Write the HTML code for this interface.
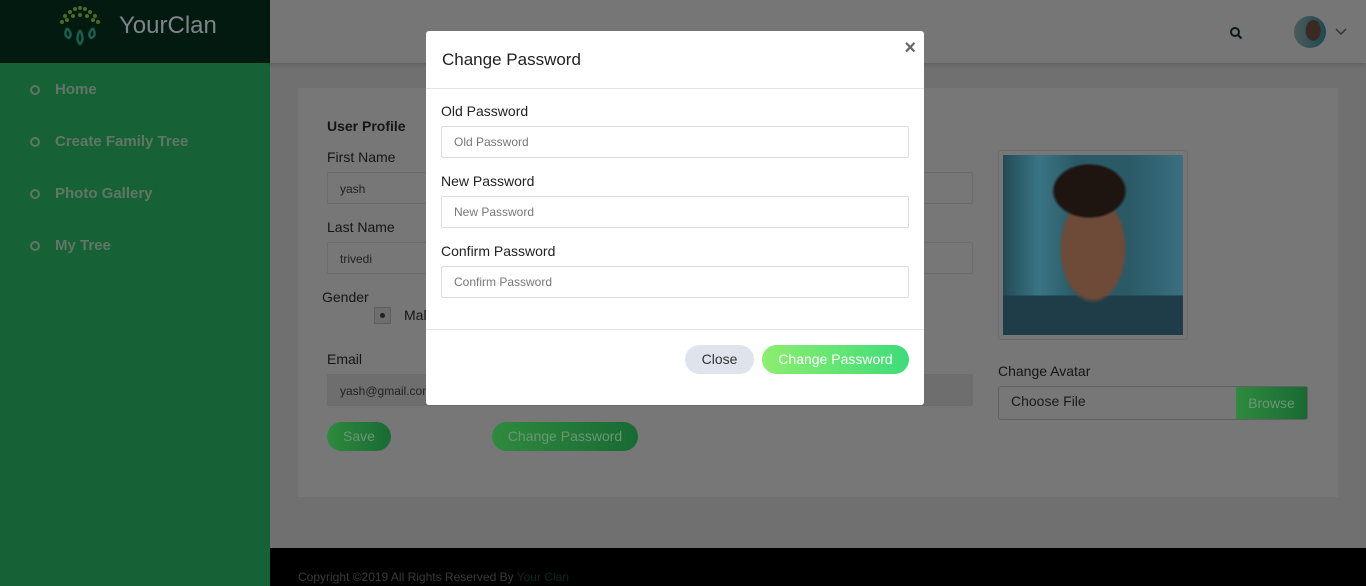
<!DOCTYPE html>
<html><head><style>
*{box-sizing:border-box;margin:0;padding:0}
body{width:1366px;height:586px;overflow:hidden;position:relative;font-family:"Liberation Sans",sans-serif;background:#707070}
.abs{position:absolute}
#side{left:0;top:0;width:270px;height:586px;background:#166236}
#logo{left:0;top:0;width:270px;height:63px;background:#021a10}
#top{left:270px;top:0;width:1096px;height:63px;background:#767676;box-shadow:0 2px 4px rgba(0,0,0,.15)}
.nav{position:absolute;left:30px;color:#627566;font-weight:bold;font-size:15px}
.nav i{display:inline-block;width:10px;height:10px;border:2px solid #627566;border-radius:50%;margin-right:15px;vertical-align:-1px}
#card{left:298px;top:88px;width:1040px;height:409px;background:#777}
.lbl{position:absolute;color:#151515;font-size:14px}
.inp{position:absolute;background:#777;border:1px solid #6c6c6c;border-radius:2px;height:32px;font-size:12px;color:#222;padding:9px 12px}
.btn{position:absolute;border-radius:16px;background:linear-gradient(90deg,#2f8a3e,#186a34);color:#6b9674;font-size:14px;text-align:center;line-height:28px;height:29px}
#foot{left:270px;top:548px;width:1096px;height:38px;background:#000;color:#3a3a3a;font-size:12px;padding:22px 0 0 28px}
#modal{left:426px;top:31px;width:498px;height:374px;background:#fff;border-radius:3px}
.ml{position:absolute;left:15px;color:#222;font-size:14px}
.mi{position:absolute;left:15px;width:468px;height:32px;border:1px solid #ddd;border-radius:2px;font-size:12px;color:#777;padding:8px 12px}
</style></head><body>
<div class="abs" id="side"></div>
<div class="abs" id="logo">
<svg class="abs" style="left:55px;top:4px" width="50" height="44" viewBox="0 0 50 44">
<g fill="#4f6b25"><circle cx="10" cy="12" r="2"/><circle cx="15" cy="8" r="2"/><circle cx="20" cy="5" r="2"/><circle cx="25" cy="4" r="2"/><circle cx="30" cy="5" r="2"/><circle cx="35" cy="8" r="2"/><circle cx="40" cy="12" r="2"/><circle cx="7" cy="18" r="2"/><circle cx="43" cy="18" r="2"/><circle cx="18" cy="12" r="2"/><circle cx="32" cy="12" r="2"/><circle cx="25" cy="11" r="2"/><circle cx="12" cy="16" r="2"/><circle cx="38" cy="16" r="2"/></g>
<g fill="none" stroke="#1a5e4c" stroke-width="2.5"><path d="M12 24q-4 8 2 10q4-4-2-10"/><path d="M25 26q-5 10 0 14q5-4 0-14"/><path d="M38 24q4 8-2 10q-4-4 2-10"/></g>
</svg>
<div class="abs" style="left:119px;top:12px;color:#7f858a;font-size:24px">YourClan</div>
</div>
<div class="nav" style="top:81px"><i></i>Home</div>
<div class="nav" style="top:133px"><i></i>Create Family Tree</div>
<div class="nav" style="top:185px"><i></i>Photo Gallery</div>
<div class="nav" style="top:237px"><i></i>My Tree</div>
<div class="abs" id="top">
<svg class="abs" style="left:959px;top:26px" width="14" height="14" viewBox="0 0 14 14"><circle cx="6" cy="6" r="4" fill="none" stroke="#0c1a1a" stroke-width="2"/><path d="M9 9l3.5 3.5" stroke="#0c1a1a" stroke-width="2.2"/></svg>
<div class="abs" style="left:1024px;top:16px;width:32px;height:32px;border-radius:50%;background:radial-gradient(ellipse 8px 11px at 60% 45%,#3a2a22 0 90%,transparent 100%),linear-gradient(90deg,#4a5a5a,#1f4a55)"></div>
<svg class="abs" style="left:1065px;top:28px" width="12" height="8"><path d="M1 1l5 5 5-5" fill="none" stroke="#333" stroke-width="1.5"/></svg>
</div>
<div class="abs" id="card">
<div class="lbl" style="left:29px;top:30px;font-weight:bold">User Profile</div>
<div class="lbl" style="left:29px;top:61px">First Name</div>
<div class="inp" style="left:29px;top:84px;width:646px">yash</div>
<div class="lbl" style="left:29px;top:131px">Last Name</div>
<div class="inp" style="left:29px;top:154px;width:646px">trivedi</div>
<div class="lbl" style="left:24px;top:201px">Gender</div>
<div class="abs" style="left:76px;top:219px;width:17px;height:17px;border:1px solid #5e5e5e;background:#6e6e6e"><div style="margin:5px;width:5px;height:5px;border-radius:50%;background:#222"></div></div>
<div class="lbl" style="left:106px;top:219px">Mal</div>
<div class="lbl" style="left:29px;top:263px">Email</div>
<div class="inp" style="left:29px;top:286px;width:646px;background:#6e6e6e">yash@gmail.com</div>
<div class="btn" style="left:29px;top:334px;width:64px">Save</div>
<div class="btn" style="left:194px;top:334px;width:146px">Change Password</div>
<div class="abs" style="left:700px;top:62px;width:190px;height:190px;border:1px solid #6c6c6c;border-radius:3px;padding:4px"><div style="width:180px;height:180px;background:radial-gradient(ellipse 38px 28px at 48% 20%,#1e1410 0 90%,transparent 100%),radial-gradient(ellipse 34px 55px at 50% 52%,#6e4a38 0 90%,transparent 100%),linear-gradient(0deg,#1e3d48 0 22%,transparent 22%),linear-gradient(90deg,#234a55,#3a7585 20%,#2a5a66 40%,#2a5a66 70%,#3a7080)"></div></div>
<div class="lbl" style="left:700px;top:275px">Change Avatar</div>
<div class="abs" style="left:700px;top:298px;width:310px;height:34px;border:1px solid #606060;border-radius:3px;background:#777"><span style="position:absolute;left:12px;top:6px;font-size:14px;color:#1a1a1a">Choose File</span><div style="position:absolute;right:0;top:0;width:71px;height:32px;background:linear-gradient(90deg,#2f8a3e,#186a34);color:#6b9674;font-size:14px;text-align:center;line-height:32px">Browse</div></div>
</div>
<div class="abs" id="foot">Copyright ©2019 All Rights Reserved By <span style="color:#0a2a14">Your Clan</span></div>
<div class="abs" id="modal">
<div class="abs" style="left:16px;top:19px;font-size:17px;color:#222">Change Password</div>
<div class="abs" style="right:8px;top:6px;font-size:20px;font-weight:bold;color:#666">×</div>
<div class="abs" style="left:0;top:57px;width:498px;border-top:1px solid #e5e5e5"></div>
<div class="ml" style="top:72px">Old Password</div>
<div class="mi" style="top:95px">Old Password</div>
<div class="ml" style="top:142px">New Password</div>
<div class="mi" style="top:165px">New Password</div>
<div class="ml" style="top:212px">Confirm Password</div>
<div class="mi" style="top:235px">Confirm Password</div>
<div class="abs" style="left:0;top:298px;width:498px;border-top:1px solid #e5e5e5"></div>
<div class="abs" style="left:259px;top:314px;width:69px;height:29px;border-radius:15px;background:#dfe4ec;color:#333;font-size:14px;text-align:center;line-height:29px">Close</div>
<div class="abs" style="left:336px;top:314px;width:147px;height:29px;border-radius:15px;background:linear-gradient(90deg,#8cee6e,#3ddc7a);color:#fff;font-size:14px;text-align:center;line-height:29px">Change Password</div>
</div>
</body></html>
